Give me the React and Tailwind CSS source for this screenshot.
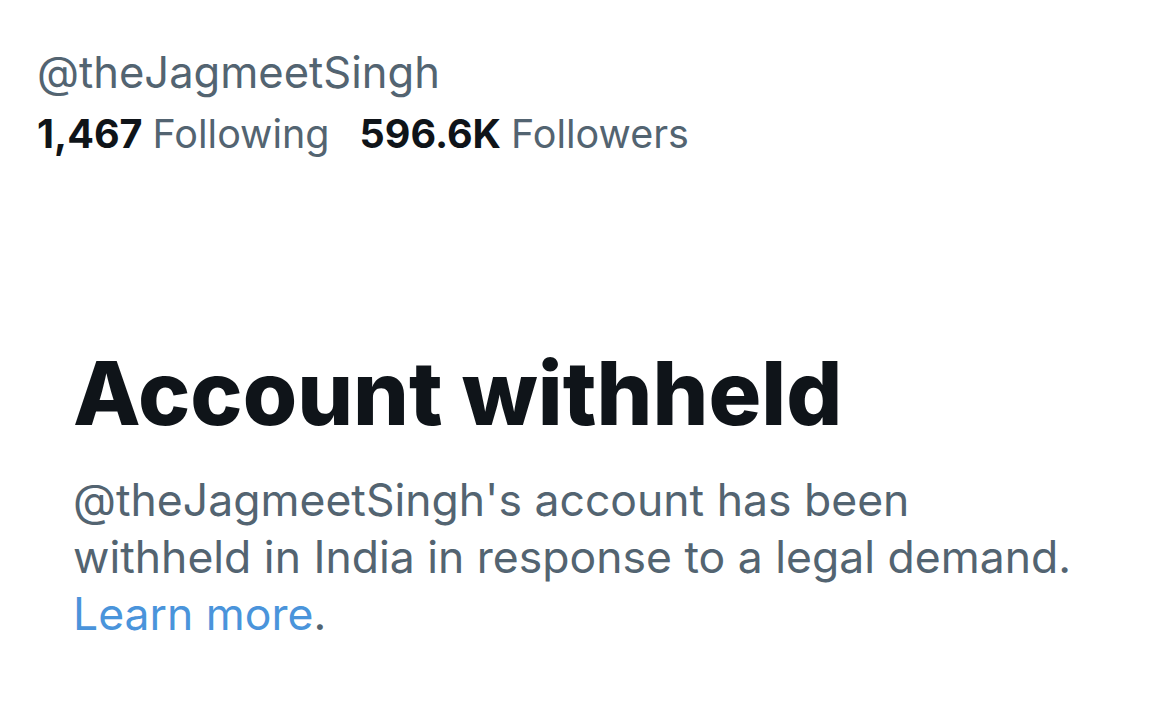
import React from "react";

export default function App() {
  return (
    <div
      className="h-[721px] w-[1169px] overflow-hidden bg-white"
      style={{ fontFamily: "Inter, 'Noto Sans', sans-serif" }}
    >
      <div className="px-[37px] pt-[46px]">
        <div className="text-[43.5px] leading-[52px] text-[#536471]">@theJagmeetSingh</div>
        <div className="mt-[12px] flex items-baseline text-[39.5px] leading-[48px]">
          <span className="font-bold text-[#0f1419]">1,467</span>
          <span className="ml-[10px] text-[#536471]">Following</span>
          <span className="ml-[30px] font-bold text-[#0f1419]">596.6K</span>
          <span className="ml-[10px] text-[#536471]">Followers</span>
        </div>
      </div>
      <div className="px-[73px] pt-[185px]">
        <h1 className="text-[88px] font-extrabold leading-[100px] text-[#0f1419]">
          Account withheld
        </h1>
        <p className="mt-[29px] max-w-[1060px] text-[44.5px] leading-[57px] text-[#536471]">
          @theJagmeetSingh's account has been
          <br />
          withheld in India in response to a legal demand.
          <br />
          <span className="text-[#4a94db]">Learn more</span>.
        </p>
      </div>
    </div>
  );
}
